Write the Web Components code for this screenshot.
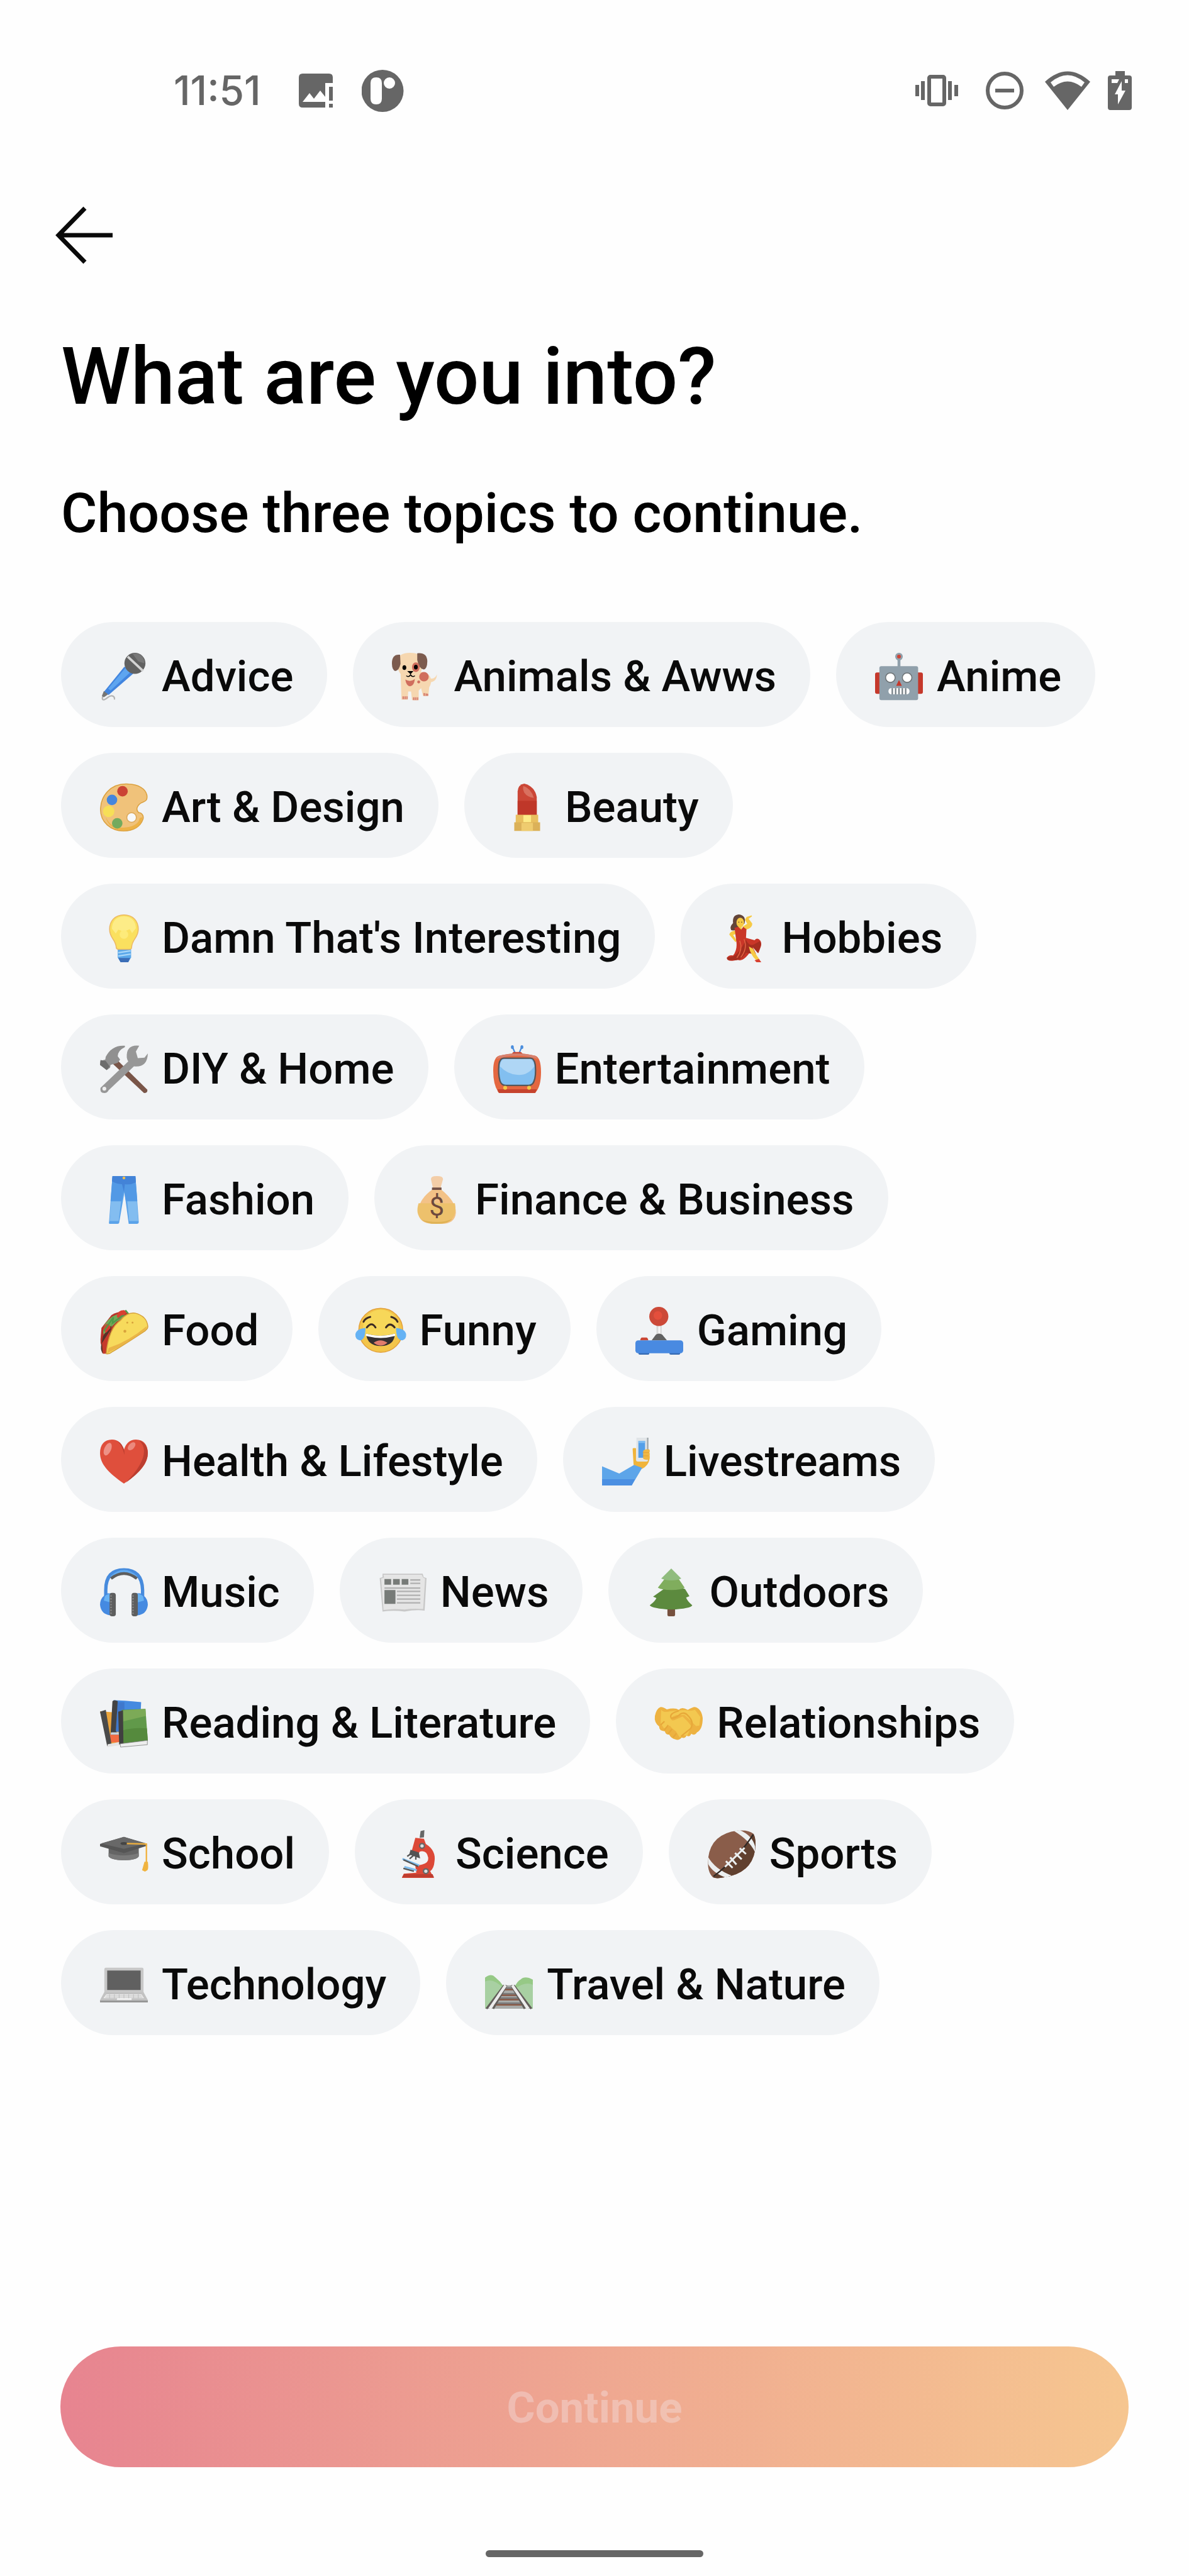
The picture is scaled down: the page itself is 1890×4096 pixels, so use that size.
<!DOCTYPE html>
<html lang="en">
<head>
<meta charset="utf-8">
<meta name="viewport" content="width=device-width, initial-scale=1">
<title>What are you into?</title>
<style>
    body {
        margin: 0;
        background: #fefefe;
        font-family: Roboto, "Liberation Sans", sans-serif;
    }
</style>
</head>
<body>

<onboarding-screen>
    <status-bar slot="status" time="11:51"></status-bar>
    <back-button slot="nav"></back-button>
    <h1 slot="title">What are you into?</h1>
    <h2 slot="subtitle">Choose three topics to continue.</h2>
    <topic-chip icon="mic">Advice</topic-chip>
    <topic-chip icon="dog">Animals &amp; Awws</topic-chip>
    <topic-chip icon="robot">Anime</topic-chip>
    <topic-chip icon="palette">Art &amp; Design</topic-chip>
    <topic-chip icon="lipstick">Beauty</topic-chip>
    <topic-chip icon="bulb">Damn That's Interesting</topic-chip>
    <topic-chip icon="dancer">Hobbies</topic-chip>
    <topic-chip icon="tools">DIY &amp; Home</topic-chip>
    <topic-chip icon="tv">Entertainment</topic-chip>
    <topic-chip icon="jeans">Fashion</topic-chip>
    <topic-chip icon="money">Finance &amp; Business</topic-chip>
    <topic-chip icon="taco">Food</topic-chip>
    <topic-chip icon="joy">Funny</topic-chip>
    <topic-chip icon="joystick">Gaming</topic-chip>
    <topic-chip icon="heart">Health &amp; Lifestyle</topic-chip>
    <topic-chip icon="selfie">Livestreams</topic-chip>
    <topic-chip icon="headphones">Music</topic-chip>
    <topic-chip icon="newspaper">News</topic-chip>
    <topic-chip icon="tree">Outdoors</topic-chip>
    <topic-chip icon="books">Reading &amp; Literature</topic-chip>
    <topic-chip icon="handshake">Relationships</topic-chip>
    <topic-chip icon="cap">School</topic-chip>
    <topic-chip icon="microscope">Science</topic-chip>
    <topic-chip icon="football">Sports</topic-chip>
    <topic-chip icon="laptop">Technology</topic-chip>
    <topic-chip icon="railway">Travel &amp; Nature</topic-chip>
    <continue-button slot="action">Continue</continue-button>
</onboarding-screen>

<script>

// < ======================================================
// < Topic Icons
// < ======================================================

/**
 * SVG content for each topic icon, drawn on a 100 x 100 grid
 * @type {Object<string, string>}
 */
const ICONS = {

    mic: `
        <path d="M7 87q-5 13 2 11c8-3 9-9 16-8 5 1 6 5 5 8" fill="none" stroke="#b5b5b5" stroke-width="3"/>
        <path d="M51 29 70 43 18 88 8 82z" fill="#4285df"/>
        <path d="M53 32 64 40 22 79 17 75z" fill="#5ea5f0"/>
        <path d="M8 80 17 87 8 93 4 90z" fill="#757575"/>
        <circle cx="73" cy="22" r="22" fill="#626262"/>
        <path d="M68 2a20 20 0 0 1 25 20L80 18z" fill="#787878"/>
        <path d="M58 8 90 38" stroke="#d4d4d4" stroke-width="5"/>`,

    dog: `
        <path d="M76 62q18 0 18-17-4 12-18 8z" fill="#f6d7b0"/>
        <path d="M18 40h45q18 3 19 18 0 8-4 14l-2 18h-11l-4-16-5 5v20H42l-2-18h-6l-1 17H20z" fill="#f6d7b0"/>
        <path d="M12 16Q14 0 38 0t26 16q3 34-26 36Q8 50 12 16z" fill="#f6d7b0"/>
        <path d="M17 4Q0 2 0 22q0 14 7 16 8-1 11-15z" fill="#7c5b4e"/>
        <path d="M53 1q20-2 21 16 0 17-8 18-10-3-13-20z" fill="#7c5b4e"/>
        <ellipse cx="50" cy="30" rx="8" ry="10" fill="#d06e5d"/>
        <ellipse cx="26" cy="31" rx="4" ry="5" fill="#000"/>
        <ellipse cx="50" cy="30" rx="4" ry="5" fill="#000"/>
        <path d="M32 38h13l-6 7z" fill="#000"/>
        <path d="M30 48q5 4 9-2 4 6 9 2" fill="none" stroke="#000" stroke-width="2"/>
        <path d="M28 56q10 6 20-1-2 15-10 15t-10-14z" fill="#d06e5d"/>
        <ellipse cx="67" cy="50" rx="10" ry="10" fill="#d06e5d"/>
        <circle cx="56" cy="61" r="3" fill="#d06e5d"/>
        <path d="M22 91v6h11v-6zM44 93v6h11v-6zM66 84v6h10v-4z" fill="#d88474"/>
        <path d="M26 90v7M30 91v6M48 92v7M52 92v7M70 84v6" stroke="#f6d7b0" stroke-width="1"/>`,

    robot: `
        <path d="M0 45q0-4 4-4h8v45H4q-4 0-4-4zM100 45q0-4-4-4h-8v45h8q4 0 4-4z" fill="#c5382b"/>
        <path d="M50 8v24" stroke="#90a0ab" stroke-width="6"/>
        <circle cx="50" cy="8" r="8" fill="#90a0ab"/>
        <circle cx="50" cy="8" r="4" fill="#d04234"/>
        <rect x="9" y="28" width="81" height="71" rx="4" fill="#90a0ab"/>
        <circle cx="32" cy="52" r="10" fill="#fff" stroke="#6d7376" stroke-width="2"/>
        <circle cx="67" cy="52" r="10" fill="#fff" stroke="#6d7376" stroke-width="2"/>
        <path d="M50 57 56 69H44z" fill="#c5382b"/>
        <rect x="28" y="74" width="44" height="13" rx="6" fill="#fff"/>
        <path d="M36 74v13M43 74v13M50 74v13M57 74v13M64 74v13" stroke="#747e84" stroke-width="3"/>`,

    palette: `
        <path d="M60 1C20-2 2 28 1 52c-1 30 23 47 48 47 22 0 36-10 41-25 2-8-4-14-9-13-8-7-2-17 6-21 7-3 13-4 11-16C95 10 80 2 60 1z" fill="#f0c27a" stroke="#dba13f" stroke-width="2"/>
        <path d="M12 70c9 20 24 23 37 22 18-1 32-7 34-20l6-2c-3 20-17 27-38 28-20 0-35-11-39-28z" fill="#edb247"/>
        <circle cx="66" cy="71" r="10" fill="#f8f9fa" stroke="#dba85a" stroke-width="2"/>
        <circle cx="47" cy="16" r="11" fill="#cb4334"/>
        <circle cx="25" cy="34" r="11" fill="#4586dc"/>
        <circle cx="18" cy="58" r="12" fill="#f7df57"/>
        <circle cx="36" cy="83" r="11" fill="#74aa5d"/>`,

    lipstick: `
        <path d="M30 66V16Q31 2 44 0q22 6 26 28v38z" fill="#cb4636"/>
        <path d="M30 36h40v30H30z" fill="#bf3729"/>
        <path d="M42 5q16 5 22 25-14-2-20-11-4-8-2-14z" fill="#d9705f"/>
        <path d="M26 65h47v17H26z" fill="#e9bf5f"/>
        <rect x="42" y="66" width="16" height="15" fill="#fdeb87"/>
        <path d="M23 81h54v18H23z" fill="#dbb159"/>
        <path d="M38 82h24v17H38z" fill="#efcc6f"/>`,

    bulb: `
        <path d="M37 73h28v17l-6 10H43l-6-10z" fill="#5ba8ea"/>
        <path d="M38 91h25l-4 9H43z" fill="#3b6eb7"/>
        <path d="M38 80 64 76M38 87 64 83" stroke="#aad7f8" stroke-width="3"/>
        <path d="M50 1C31 1 20 14 20 31c0 20 13 20 14 39q1 3 5 3h22q5 0 5-4c1-18 14-19 14-38C80 14 69 1 50 1z" fill="#fae05f" stroke="#ecb865" stroke-width="2"/>
        <path d="M50 4C34 4 25 15 25 30l8 10 5-8 12 4 12-5 5 8 8-10C75 15 66 4 50 4z" fill="#fdec87"/>
        <circle cx="50" cy="42" r="9" fill="#fdeb7a"/>`,

    dancer: `
        <path d="M40 0Q26 1 28 18q-8 8-4 15 9 3 16-8l12-6Q56 2 40 0z" fill="#634438"/>
        <path d="M32 34Q22 35 20 42l13 16 3-3-8-12 8-3z" fill="#f7ca45"/>
        <path d="M52 32Q68 28 67 19L59 9l8-6-10 3-3 5 5 9-10 6z" fill="#f7ca45" stroke="#f7ca45" stroke-width="2"/>
        <ellipse cx="43" cy="17" rx="8" ry="10" fill="#f7ca45"/>
        <circle cx="40" cy="16" r="1" fill="#3b2620"/><circle cx="46" cy="16" r="1" fill="#3b2620"/>
        <path d="M39 26h7v10h-7z" fill="#f7ca45"/>
        <path d="M31 28 39 26 45 32 49 26 56 31 55 49 73 54q6-7 12 1 4 6 0 15l-4 11-12-13 7 15-14-2Q48 100 38 95l-11 2Q15 98 15 91q4-7 13-5Q37 74 35 58z" fill="#c93628"/>
        <path d="M55 53q8 17 20 8l9-5q4 6 0 15l-4 10-11-13-2 6 3 9-15-3Q44 99 28 95q-12 3-13-5 9 0 15-3 14-10 25-34z" fill="#a62e20"/>
        <path d="M42 55q7 18-6 36M51 52q8 19-7 38" fill="none" stroke="#e16343" stroke-width="2"/>
        <path d="M61 67 70 72Q74 82 84 95H76Q65 86 61 67z" fill="#f7ca45"/>
        <path d="M73 96 82 93 87 100H77z" fill="#d8402f"/>`,

    tools: `
        <path d="M35 30 99 93q1 7-7 7L27 39z" fill="#795548"/>
        <path d="M52 1Q25-1 12 24l-1 6-10 3-1 8 14 11 7-5 1-6 15-4 5-7-5-7q0-12 15-19z" fill="#909090"/>
        <path d="M1 31 12 33 20 44 14 52 0 41z" fill="#6c6c6c"/>
        <path d="M82 1Q54-2 56 26q1 5 3 8L1 89q-2 11 8 11 6 0 9-6l53-50q28 3 29-27l-7 9-14 1-4-14z" fill="#979797"/>
        <circle cx="9" cy="91" r="4" fill="#eee"/>`,

    tv: `
        <path d="M46 17 40 3M54 17 60 3" stroke="#4a8ddd" stroke-width="3"/>
        <ellipse cx="40" cy="4" rx="3" ry="4" fill="#4a8ddd"/><ellipse cx="60" cy="4" rx="3" ry="4" fill="#4a8ddd"/>
        <path d="M38 19 42 14H58l5 5z" fill="#c64835"/>
        <path d="M12 22Q50 12 88 22q12 4 12 34T89 98q0 2-3 2H14q-3 0-4-3Q0 82 0 53 0 26 12 22z" fill="#e46740"/>
        <path d="M12 22Q50 12 88 22l6 7Q50 15 6 29z" fill="#d6816f"/>
        <path d="M9 92h82q-2 8-5 8H14q-4 0-5-8z" fill="#c6432d"/>
        <path d="M22 27h56q8 0 10 14 2 24-3 35-3 8-11 8H26q-9 0-12-10-4-14-2-34 2-13 10-13z" fill="#82bff0" stroke="#575657" stroke-width="3"/>
        <path d="M24 29h53q7 2 9 15-14 20-36 18-21-2-36-18 1-14 10-15z" fill="#afd6f5"/>
        <circle cx="25" cy="89" r="4" fill="#f4c844"/><circle cx="75" cy="89" r="4" fill="#f4c844"/>`,

    jeans: `
        <path d="M26 0h48l7 96q0 4-4 4H60L51 34 40 98q-1 2-4 2H20q-2 0-1-5z" fill="#5aa2e9"/>
        <path d="M26 2h48l4 50H54L50 30 45 52H22z" fill="#5299e5"/>
        <path d="M26 0h48l1 13q-12 6-23 4l-2 16-4-16q-11 0-21-6z" fill="#4383d7"/>
        <path d="M23 53h21l-5 41H20zM57 53h20l3 41H61z" fill="#83bdf0"/>
        <circle cx="50" cy="4" r="3" fill="#f0bd4e"/>`,

    money: `
        <path d="M37 7Q36 0 49 0q14 0 13 7L57 25H41z" fill="#f3cda7"/>
        <path d="M40 28h18q32 26 31 49-2 23-30 23H40Q11 99 10 74q2-26 30-46z" fill="#f3c287"/>
        <path d="M11 57h76q5 25-11 37-9 6-27 6-22 0-32-9-13-12-6-34z" fill="#edc16c"/>
        <path d="M17 91q10 9 32 9 24 0 33-11-13 7-33 7-17 0-32-5z" fill="#dfb255"/>
        <path d="M39 24h20v5H39z" fill="#745145"/>
        <text x="49" y="83" text-anchor="middle" font-family="Roboto" font-size="56" font-weight="400" fill="#6d493d">$</text>`,

    taco: `
        <path d="M10 94Q0 82 1 68L3 44 24 17q20-11 34-4l5 13z" fill="#b8352a"/>
        <path d="M7 58Q4 35 26 20L55 7q-5 18-20 24L20 46z" fill="#73a957"/>
        <path d="M6 62Q18 44 24 39L16 96 5 97Q0 88 3 78z" fill="#553429"/>
        <path d="M6 48q5-15 13-12l3 8-9 10zM35 19q3-13 16-12l5 5-9 8-8 7z" fill="#d84031"/>
        <path d="M8 51 28 22 26 34 46 19 61 19M53 7l7 8" fill="none" stroke="#4d9a4a" stroke-width="3"/>
        <path d="M4 76 22 48 12 98H6z" fill="#c63b2c"/>
        <path d="M13 98Q18 44 43 28 56 11 73 13q25 6 27 28 0 6-10 12Q49 80 24 95q-4 4-11 3z" fill="#f7da5c" stroke="#d6a13d" stroke-width="2"/>
        <path d="M98 40Q60 72 18 86l-3 11Q60 75 91 51q6-4 7-11z" fill="#eab547"/>
        <circle cx="57" cy="33" r="2" fill="#d8a23b"/><circle cx="68" cy="33" r="2" fill="#d8a23b"/><circle cx="52" cy="51" r="3" fill="#d8a23b"/>`,

    joy: `
        <circle cx="49" cy="49" r="46" fill="#f3c54a" stroke="#e3a13c" stroke-width="2"/>
        <circle cx="49" cy="43" r="37" fill="#f8de60" opacity=".7"/>
        <path d="M13 31q4-8 14-10M84 31q-4-8-13-10M20 43q10-13 18 0M60 43q8-12 18 0" fill="none" stroke="#3b2a23" stroke-width="4" stroke-linecap="round"/>
        <path d="M18 56q30 9 61 0-2 26-30 26T18 56z" fill="#343031"/>
        <path d="M18 56q30 9 61 0v5q-30 8-61 0z" fill="#fff"/>
        <path d="M34 75q14-10 29 0-14 12-29 0z" fill="#df7b6c"/>
        <path d="M17 44Q17 70 5 70-5 68-4 57-2 46 17 44zM81 44q0 26 13 26 9-2 8-13-2-11-21-13z" fill="#65b2f4"/>`,

    joystick: `
        <path d="M44 35h11v30H44z" fill="#d9d9d9"/><path d="M48 35h4v30h-4z" fill="#f6f6f6"/>
        <path d="M34 70 43 58q6-4 13 0l10 12z" fill="#616161"/>
        <path d="M10 70q1-6 4-6h9q3 0 4 6z" fill="#c94635"/>
        <path d="M6 95h23v3q0 2-3 2H9q-3 0-3-5zM71 95h23q0 5-3 5H74q-3 0-3-3z" fill="#376bb3"/>
        <rect y="70" width="100" height="27" rx="6" fill="#498ae1"/>
        <circle cx="49" cy="20" r="20" fill="#cc4938"/><circle cx="47" cy="18" r="9" fill="#e44f3c"/>`,

    heart: `
        <path d="M50 96C16 73 0 54 0 32 0 15 9 4 25 4q18 0 25 21Q57 4 75 4c16 0 25 11 25 28 0 22-16 41-50 64z" fill="#df4f3c"/>
        <path d="M82 6q17 6 18 26 0 30-46 62 38-39 38-66 0-13-10-22zM36 7q11 5 15 21v8Q46 15 36 7z" fill="#bc3e30"/>
        <ellipse cx="16" cy="24" rx="7" ry="14" fill="#ee9186" transform="rotate(24 16 24)"/>
        <ellipse cx="66" cy="18" rx="6" ry="10" fill="#ec897d" transform="rotate(42 66 18)"/>`,

    selfie: `
        <path d="M64 24q-1-3 7-2v24h14L83 26q12-4 16-1 1 3-1 5 3 10 1 16-2 12-15 19L66 57z" fill="#f0b43b"/>
        <path d="M72 0h22q3 0 2 4v43q0 3-3 3H75q-4 0-4-4z" fill="#e1e5e8"/>
        <path d="M94 0h3v25h-3z" fill="#9ea5a9"/>
        <path d="M76 7h14v35H76z" fill="#549fe9"/><path d="M76 7h14v4H76z" fill="#81bff4"/>
        <path d="M86 28q3-5 12-3 3 2 1 6 2 4-1 7 2 4-2 8-6 1-10-2z" fill="#efb744"/>
        <path d="M85 31h13M85 38h12" stroke="#de9b31" stroke-width="1"/>
        <path d="M0 60 36 75 67 57 84 63 62 100H0z" fill="#5da5e9"/>
        <path d="M0 87h69l-7 13H0z" fill="#4b8fe2"/>`,

    headphones: `
        <path d="M12 58V45Q12 3 50 3t39 42v13" fill="none" stroke="#478bdd" stroke-width="7"/>
        <path d="M24 18Q50-6 76 18" fill="none" stroke="#61a9ef" stroke-width="6"/>
        <path d="M23 21Q50 0 77 21" fill="none" stroke="#5d5d5d" stroke-width="6"/>
        <path d="M24 52h-8Q0 60 0 76q2 20 22 22zM76 52h8q16 8 16 24-2 20-22 22z" fill="#458ae1"/>
        <path d="M10 58q5-5 12-5v18L8 67zM90 58q-5-5-12-5v18l14-4z" fill="#68b2f3"/>
        <rect x="20" y="51" width="13" height="49" rx="5" fill="#5e5e5e"/>
        <rect x="66" y="51" width="13" height="49" rx="5" fill="#5e5e5e"/>
        <path d="M23 56v40M69 56v40" stroke="#878787" stroke-width="3" stroke-dasharray="3 3"/>`,

    newspaper: `
        <path d="M8 11h84l2 7 6 2-4 68q-20-2-42 2-23-3-46 0L2 20l6-2z" fill="#c8c8c8"/>
        <path d="M10 13h80l3 6 4 2-4 64q-20-2-39 1-23-3-44 1L5 21l6-2z" fill="#e5e5e5"/>
        <path d="M12 22h14v12H12zM30 22h14v12H30zM48 22h14v12H48zM12 45h23v29H12z" fill="#777b78"/>
        <path d="M66 24h21M66 31h21M12 41h75M38 48h49M38 56h49M38 64h49M38 72h49" stroke="#b0b0b0" stroke-width="3"/>`,

    tree: `
        <path d="M42 82h16v15q0 3-3 3H45q-3 0-3-3z" fill="#76503e"/>
        <path d="M50 32 79 43 88 58 81 61Q84 69 94 77 91 84 50 86 10 84 5 77q11-8 14-15l-7-3z" fill="#5c8a3e"/>
        <path d="M50 15 65 21 78 40q-8 5-28 5T22 40l14-18z" fill="#80ad5d"/>
        <path d="M50 0 71 21q-9 4-21 4t-21-4z" fill="#90bc7e"/>`,

    books: `
        <path d="M28 2q20 0 58 4l-3 62-60 6z" fill="#458ae0"/>
        <path d="M25 27 0 25 16 95 46 93V36z" fill="#eca53b"/><path d="M20 73h25v17H20z" fill="#f26b42"/>
        <path d="M0 26 12 22 24 94 15 98z" fill="#4a4a4a"/><path d="M16 94l30-6-5 8-26 4z" fill="#e4e4e4"/>
        <path d="M37 6h14v62H32z" fill="#3f78cc"/>
        <path d="M26 4Q30 0 37 4L33 66l6 8H22z" fill="#434343"/><path d="M23 69h25l-4 5H22z" fill="#c8d4dc"/>
        <path d="M45 22 95 20 100 87 49 96z" fill="#61994a"/>
        <path d="M48 23 95 20 96 35 49 46z" fill="#7caa57"/>
        <path d="M47 65q25-7 51-4l2 26-53 9z" fill="#558a3d"/>
        <path d="M38 26 48 23 49 96 40 94z" fill="#404040"/>
        <path d="M42 93 99 86v9l-56 5z" fill="#ededed" stroke="#777" stroke-width="1"/>`,

    handshake: `
        <path d="M12 16q6 0 13 5 17-4 25 1 6-7 19 0 10-6 14-6 14 2 17 23 0 24-12 30-5 8-12 3-3 8-10 4-3 7-10 4-6 7-13 4-9-2-13-10-8 0-9-7Q8 66 9 57-2 49 0 35 3 19 12 16z" fill="#edb241"/>
        <path d="M13 22q6 7 19 3l17-2-7 10-9 7q2 7 11 2l14-6 11 11 7 9-8 20-11-1-5 5-8-13-8-6-5-6-12 6-7-11z" fill="#f3c850"/>
        <path d="M54 23q13-1 16 1 7 0 14-2l11 15-2 18-7 1-24-23H46l-8 3 8-10z" fill="#f3c850"/>
        <path d="M50 24Q29 30 34 39q9 2 19-8 9-5 15 2Q83 47 75 61L55 77M12 54l8-8M20 64l8-10M28 72l8-10M38 80l7-9" fill="none" stroke="#e7a839" stroke-width="3"/>`,

    cap: `
        <path d="M18 33h63v22q-5 8-31 8t-32-8z" fill="#656565"/>
        <path d="M18 48q30 10 63 0v7q-5 8-31 8t-32-8z" fill="#797979"/>
        <path d="M0 29 50 14 98 29v4L50 48 0 34z" fill="#555"/>
        <path d="M2 28 50 14 97 28 50 39z" fill="#686868"/>
        <ellipse cx="50" cy="28" rx="7" ry="3" fill="#444"/>
        <path d="M56 28 97 29v38" fill="none" stroke="#f1b13d" stroke-width="3"/>
        <path d="M93 66h7q2 15-1 18l-5 3-6-3z" fill="#f0b33f"/>`,

    microscope: `
        <path d="M56 2 64 0 63 15 54 16z" fill="#676767"/>
        <path d="M45 16 63 18 67 29q22 14 18 37-1 14-9 20l8 14H17l4-9 26-2-2-14 14-3Q73 69 72 58q-3-17-18-13L49 57 36 49z" fill="#dc4837"/>
        <path d="M17 99 21 92h60l3 7z" fill="#bf3d2f"/>
        <path d="M36 43 51 48 53 57 34 50zM35 50 28 55M41 53 33 60M46 54v8" fill="#545454" stroke="#545454" stroke-width="3"/>
        <path d="M18 60 53 74M22 77 48 84" stroke="#7ebcee" stroke-width="4"/>
        <path d="M20 62 51 76M20 80 42 86" stroke="#545454" stroke-width="3"/>
        <circle cx="59" cy="33" r="5" fill="#ddd" stroke="#666" stroke-width="3"/>
        <circle cx="67" cy="86" r="5" fill="#ddd" stroke="#666" stroke-width="3"/>`,

    football: `
        <path d="M11 99Q-2 87 1 58 7 8 62 1q24-2 34 7 6 11 3 34Q91 91 33 99q-15 3-22 0z" fill="#8a5d4a"/>
        <path d="M12 99Q69 53 96 9q6 11 3 33-8 49-66 57-14 3-21 0z" fill="#61402f"/>
        <path d="M55 2 67 0Q93 11 99 34v12Q86 20 55 2zM0 55Q15 82 50 95l-13 4Q10 89 1 71z" fill="#eceff0"/>
        <path d="M12 97Q67 54 95 9" fill="none" stroke="#302925" stroke-width="3"/>
        <path d="M36 77 77 37M38 65l14 14M47 57l13 15M57 48l14 13M67 38l13 12" stroke="#eceff0" stroke-width="4"/>`,

    laptop: `
        <path d="M12 14h76q3 0 3 4v51H9V18q0-4 3-4z" fill="#c8c8c8"/>
        <path d="M15 20h70v41H15z" fill="#606060"/>
        <path d="M9 65h82l9 17v5H0v-5z" fill="#c2c2c2"/>
        <path d="M13 70h74l5 8H7zM36 78h30v4H35z" fill="#eee"/>
        <path d="M13 73h74M11 76h78M20 70v8M30 70v8M40 70v8M50 70v8M60 70v8M70 70v8M80 70v8" stroke="#b3b3b3" stroke-width="1"/>
        <path d="M0 83h100v4H0z" fill="#979797"/>`,

    railway: `
        <path d="M0 35q13-10 21-1l10 9q5 7 9 11h22q6-12 12-15 9-9 26 0v61H0z" fill="#96c986"/>
        <path d="M0 43q17-8 38 14h26q22-15 36-7v50H0z" fill="#a8d0a2"/>
        <path d="M1 100 39 51h22l38 49z" fill="#a9aba9"/>
        <path d="M37 58h27M30 70h40M22 79h57M14 90h73" stroke="#7b7b7b" stroke-width="6"/>
        <path d="M37 60h27M29 72h42M21 81h58M12 92h76" stroke="#8a5743" stroke-width="3"/>
        <path d="M3 100 40 51M97 100 60 51M17 100 45 51M83 100 55 51" stroke="#625d5a" stroke-width="4"/>
        <path d="M10 100 43 51M90 100 57 51" stroke="#ececec" stroke-width="6"/>`
};

// < ======================================================
// < Onboarding Screen
// < ======================================================

/**
 * Full height screen with a status bar, heading, chips and bottom action
 * @element onboarding-screen
 */
class OnboardingScreen extends HTMLElement {
    constructor() {
        super();
        this.attachShadow({ mode: 'open' });
        this.shadowRoot.innerHTML = /*html*/`
<style>
:host {
    display: flex;
    flex-direction: column;
    box-sizing: border-box;
    min-height: 100vh;
    padding-bottom: 30px;
}

header {
    padding: 144px 88px 0;
}

main {
    flex: 1;
    padding: 104px 97px 0;
}

::slotted(h1) {
    margin: 0 0 90px;
    font-size: 126px;
    line-height: 150px;
    font-weight: 500;
}

::slotted(h2) {
    margin: 0 0 121px;
    font-size: 88px;
    line-height: 104px;
    font-weight: 500;
}

.topics {
    display: flex;
    flex-wrap: wrap;
    gap: 41px;
}

footer {
    display: flex;
    flex-direction: column;
    gap: 132px;
    padding: 48px 96px 0;
}

.home-indicator {
    align-self: center;
    width: 346px;
    height: 11px;
    border-radius: 6px;
    background: #666;
}
</style>
<slot name="status"></slot>
<header><slot name="nav"></slot></header>
<main>
    <slot name="title"></slot>
    <slot name="subtitle"></slot>
    <div class="topics"><slot></slot></div>
</main>
<footer>
    <slot name="action"></slot>
    <div class="home-indicator"></div>
</footer>`;
    }
}

// < ======================================================
// < Status Bar
// < ======================================================

/**
 * Phone status bar, the clock text comes from the time attribute
 * @element status-bar
 */
class StatusBar extends HTMLElement {
    constructor() {
        super();
        this.attachShadow({ mode: 'open' });
        this.shadowRoot.innerHTML = /*html*/`
<style>
:host {
    display: flex;
    align-items: center;
    justify-content: space-between;
    padding: 104px 91px 0 276px;
    color: #666;
}

svg {
    display: block;
    fill: currentColor;
}

.left,
.right {
    display: flex;
    align-items: center;
    height: 80px;
}

.right {
    gap: 28px;
}

.time {
    font-family: Inter, sans-serif;
    font-size: 64px;
    font-weight: 500;
    line-height: 80px;
    margin-right: 60px;
}

.circle {
    margin-left: 46px;
}
</style>
<div class="left">
    <span class="time"></span>
    <svg width="54" height="54" viewBox="0 0 54 54">
        <path d="M6 0h42q6 0 6 6v9H42v39H6q-6 0-6-6V6q0-6 6-6zM6 45h36V37l-8-10-10 13-7-9z" fill-rule="evenodd"/>
        <path d="M48 21h6v22h-6zM48 48h6v6h-6z"/>
    </svg>
    <svg class="circle" width="67" height="67" viewBox="0 0 67 67">
        <path d="M33 0a33 33 0 0 1 0 67 33 33 0 0 1 0-67zM23 12q-9 0-9 9v25q0 9 9 9t9-9V21q0-9-9-9zM44 12a9 9 0 0 0 0 18 9 9 0 0 0 0-18z" fill-rule="evenodd"/>
    </svg>
</div>
<div class="right">
    <svg width="88" height="50" viewBox="0 0 88 50">
        <rect x="32" y="3" width="24" height="44" rx="2" fill="none" stroke="currentColor" stroke-width="6"/>
        <path d="M10 16h6v18h-6zM19 10h6v30h-6zM62 10h6v30h-6zM72 16h6v18h-6z"/>
    </svg>
    <svg width="72" height="62" viewBox="0 0 72 62">
        <circle cx="36" cy="31" r="27" fill="none" stroke="currentColor" stroke-width="6"/>
        <path d="M21 28h30v6H21z"/>
    </svg>
    <svg width="72" height="62" viewBox="0 0 72 62">
        <path d="M0 17Q36-16 72 17L36 62zM9 18l5 7q22-17 44 0l5-7Q36-5 9 18z" fill-rule="evenodd"/>
    </svg>
    <svg width="38" height="62" viewBox="0 0 38 62">
        <path d="M12 0h15v7h7q4 0 4 4v47q0 4-4 4H4q-4 0-4-4V11q0-4 4-4h8zM6 13v6h9l3-6zM27 13v6h5v-6zM22 16 11 37h5v16l12-22h-6z" fill-rule="evenodd"/>
    </svg>
</div>`;
    }

    connectedCallback() {
        this.shadowRoot.querySelector('.time').textContent = this.getAttribute('time');
    }
}

// < ======================================================
// < Back Button
// < ======================================================

/**
 * Arrow button that leads to the previous step
 * @element back-button
 */
class BackButton extends HTMLElement {
    constructor() {
        super();
        this.attachShadow({ mode: 'open' });
        this.shadowRoot.innerHTML = /*html*/`
<style>
:host {
    display: block;
}

button {
    display: block;
    padding: 0;
    border: 0;
    background: none;
    cursor: pointer;
}

svg {
    display: block;
}
</style>
<button type="button" aria-label="Back">
    <svg width="92" height="92" viewBox="0 0 92 92" fill="none" stroke="#0a0a0a" stroke-width="7">
        <path d="M91 46H5M47 3 5 46l42 43"/>
    </svg>
</button>`;
        this.shadowRoot.querySelector('button').addEventListener('click', () => history.back());
    }
}

// < ======================================================
// < Topic Chip
// < ======================================================

/**
 * Pill shaped toggle with an icon and a label
 * @element topic-chip
 */
class TopicChip extends HTMLElement {
    constructor() {
        super();
        this.attachShadow({ mode: 'open' });
        this.shadowRoot.innerHTML = /*html*/`
<style>
:host {
    display: block;
}

button {
    display: flex;
    align-items: center;
    gap: 22px;
    padding: 49px 54px 42px 62px;
    border: 0;
    border-radius: 84px;
    background: #f1f3f5;
    color: #0a0a0a;
    font-family: inherit;
    font-size: 69px;
    font-weight: 500;
    line-height: 76px;
    white-space: nowrap;
    cursor: pointer;
}

button[aria-pressed="true"] {
    background: #dfe3e7;
}

svg {
    display: block;
    width: 76px;
    height: 76px;
    overflow: visible;
}
</style>
<button type="button" aria-pressed="false">
    <svg viewBox="0 0 100 100" aria-hidden="true"></svg>
    <span><slot></slot></span>
</button>`;
        this._button = this.shadowRoot.querySelector('button');
        this._icon = this.shadowRoot.querySelector('svg');
        this._button.addEventListener('click', () => {
            const pressed = this._button.getAttribute('aria-pressed') === 'true';
            this._button.setAttribute('aria-pressed', String(!pressed));
            this.dispatchEvent(new CustomEvent('topic-toggle', { bubbles: true }));
        });
    }

    connectedCallback() {
        this._icon.innerHTML = ICONS[this.getAttribute('icon')] || '';
    }

    /** @returns {boolean} Whether the topic is chosen */
    get selected() {
        return this._button.getAttribute('aria-pressed') === 'true';
    }
}

// < ======================================================
// < Continue Button
// < ======================================================

/**
 * Bottom action, disabled until three topics are chosen
 * @element continue-button
 */
class ContinueButton extends HTMLElement {
    constructor() {
        super();
        this.attachShadow({ mode: 'open' });
        this.shadowRoot.innerHTML = /*html*/`
<style>
:host {
    display: block;
}

button {
    display: block;
    width: 100%;
    padding: 58px 48px 54px;
    border: 0;
    border-radius: 96px;
    background: linear-gradient(90deg, #e78490, #eea491 45%, #f6c690);
    color: #fff;
    font-family: inherit;
    font-size: 69px;
    font-weight: 700;
    line-height: 80px;
}

button:disabled {
    color: rgba(244, 224, 224, 0.42);
}
</style>
<button type="button" disabled><slot></slot></button>`;
        this._button = this.shadowRoot.querySelector('button');
    }

    connectedCallback() {
        document.addEventListener('topic-toggle', () => {
            const chosen = [...document.querySelectorAll('topic-chip')].filter(chip => chip.selected);
            this._button.disabled = chosen.length < 3;
        });
    }
}

// * ======================================================
// * Custom Element Registration
// * ======================================================

customElements.define('onboarding-screen', OnboardingScreen);
customElements.define('status-bar', StatusBar);
customElements.define('back-button', BackButton);
customElements.define('topic-chip', TopicChip);
customElements.define('continue-button', ContinueButton);

</script>
</body>
</html>
